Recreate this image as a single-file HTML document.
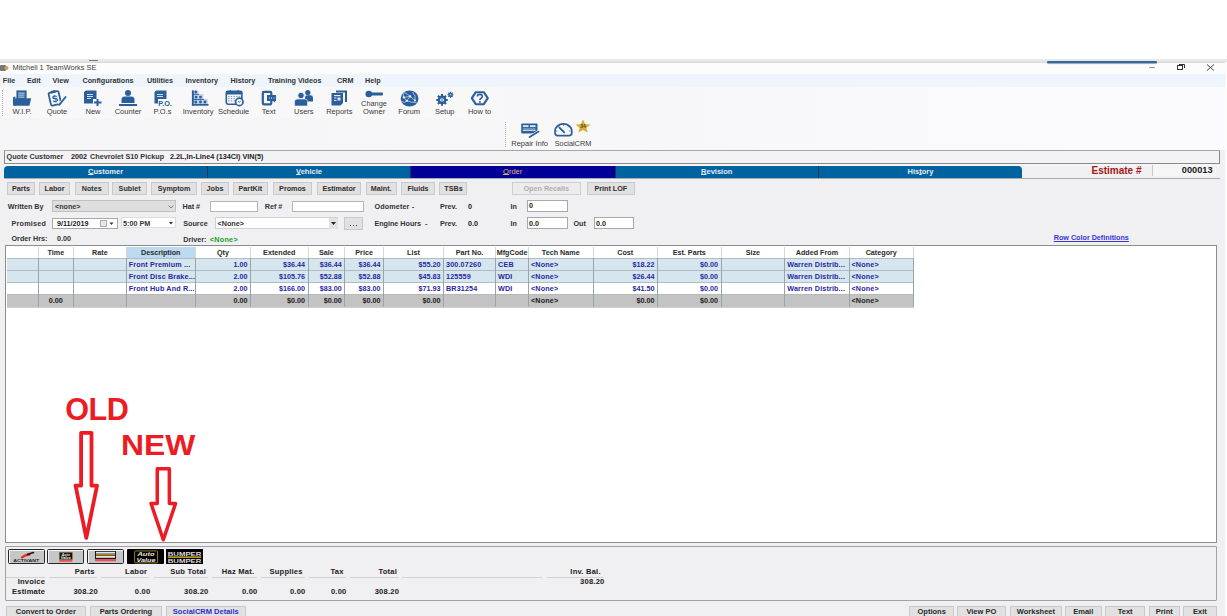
<!DOCTYPE html>
<html><head><meta charset="utf-8">
<style>
*{margin:0;padding:0;box-sizing:border-box}
html,body{width:1227px;height:616px;overflow:hidden}
body{position:relative;background:#f0eff2;font-family:"Liberation Sans",sans-serif;color:#262626}
.a{position:absolute}
.t{position:absolute;white-space:nowrap;line-height:1}
svg{position:absolute;overflow:visible}
</style></head><body>
<div class="a" style="left:0px;top:0px;width:1227px;height:59px;background:#fff"></div>
<div class="a" style="left:0px;top:58.6px;width:1227px;height:4.4px;background:linear-gradient(#ececec,#e4e4e4 60%,#d8d8d8 92%,#ececec)"></div>
<div class="a" style="left:0px;top:63px;width:1225px;height:11px;background:#fcfcfc"></div>
<div class="a" style="left:89.3px;top:59.6px;width:8.5px;height:0.9px;background:#7a7a7a"></div>
<svg style="left:0px;top:64px" width="9" height="8" viewBox="0 0 9 8"><rect x="0" y="1" width="6" height="6" rx="1" fill="#777"/><circle cx="6.5" cy="4" r="2" fill="#d9a23a"/></svg>
<div class="t" style="left:12.5px;top:64.31px;font-size:7.4px;color:#3c3c3c;">Mitchell 1 TeamWorks SE</div>
<div class="a" style="left:1047px;top:61.2px;width:110px;height:2.3px;background:#2a6aa6;border-radius:1.2px;box-shadow:0 0.8px 0.8px #8a8a8a"></div>
<div class="a" style="left:1149px;top:66.5px;width:6px;height:1px;background:#999"></div>
<svg style="left:1177px;top:64.2px" width="8" height="6" viewBox="0 0 8 6"><rect x="0.5" y="1.5" width="5" height="4" fill="none" stroke="#333" stroke-width="1"/><path d="M2 0.5H7.5V4" fill="none" stroke="#333" stroke-width="1"/></svg>
<svg style="left:1206px;top:64px" width="9" height="7" viewBox="0 0 9 7"><path d="M1 0.5L8 6.5M8 0.5L1 6.5" stroke="#333" stroke-width="0.9"/></svg>
<div class="a" style="left:1225px;top:62px;width:2px;height:554px;background:#fcfcfc"></div>
<div class="a" style="left:0px;top:74px;width:1224px;height:13px;background:#eef5fd"></div>
<div class="t" style="left:2.8px;top:77.34px;font-size:7.2px;font-weight:bold;color:#333;">File</div>
<div class="t" style="left:27px;top:77.34px;font-size:7.2px;font-weight:bold;color:#333;">Edit</div>
<div class="t" style="left:52.5px;top:77.34px;font-size:7.2px;font-weight:bold;color:#333;">View</div>
<div class="t" style="left:82.5px;top:77.34px;font-size:7.2px;font-weight:bold;color:#333;">Configurations</div>
<div class="t" style="left:147px;top:77.34px;font-size:7.2px;font-weight:bold;color:#333;">Utilities</div>
<div class="t" style="left:185.6px;top:77.34px;font-size:7.2px;font-weight:bold;color:#333;">Inventory</div>
<div class="t" style="left:230.6px;top:77.34px;font-size:7.2px;font-weight:bold;color:#333;">History</div>
<div class="t" style="left:268px;top:77.34px;font-size:7.2px;font-weight:bold;color:#333;">Training Videos</div>
<div class="t" style="left:337px;top:77.34px;font-size:7.2px;font-weight:bold;color:#333;">CRM</div>
<div class="t" style="left:365px;top:77.34px;font-size:7.2px;font-weight:bold;color:#333;">Help</div>
<div class="a" style="left:0px;top:87px;width:1225px;height:63px;background:linear-gradient(90deg,#f5f4f7,#f7f6f9 50%,#fbfafc)"></div>
<div class="a" style="left:0px;top:87px;width:499px;height:31px;background:#f8f8f9"></div>
<div class="a" style="left:504px;top:119px;width:92px;height:29px;background:#f8f8f9"></div>
<div class="a" style="left:1.5px;top:90px;width:1px;height:26px;border-left:1px dotted #b0b0b0"></div>
<div class="a" style="left:505px;top:122px;width:1px;height:25px;border-left:1px dotted #b0b0b0"></div>
<svg style="left:13px;top:90px" width="19" height="16" viewBox="0 0 19 16"><path d="M1.2 6.8Q0 6.8 0 8V15.6H2.5V6.8Z" fill="#2b5f9c"/><path d="M3.4 0.4H13.6V9.7H3.4Z" fill="#2b5f9c"/><rect x="5.2" y="2.6" width="6.4" height="1" fill="#cfdbe8"/><rect x="5.2" y="4.6" width="6.4" height="1" fill="#cfdbe8"/><rect x="5.2" y="6.6" width="6.4" height="1" fill="#cfdbe8"/><path d="M2.6 8.2H18.2L16.4 15.8H0.6Z" fill="#2b5f9c"/></svg>
<div class="t" style="left:-178.00px;width:400px;text-align:center;top:107.70px;font-size:7.5px;color:#3a3a3a;">W.I.P.</div>
<svg style="left:47px;top:90px" width="20" height="16" viewBox="0 0 20 16"><g transform="rotate(-13 8 8)"><rect x="2.6" y="1.8" width="10.2" height="13" rx="1.2" fill="none" stroke="#2b5f9c" stroke-width="1.8"/><rect x="5.2" y="0.2" width="5" height="2.6" rx="0.6" fill="#2b5f9c"/><text x="7.7" y="12.2" font-size="10" font-weight="bold" text-anchor="middle" fill="#2b5f9c" font-family="Liberation Sans">$</text></g><path d="M12.2 14.8L18.6 7" stroke="#f8f8f9" stroke-width="3"/><path d="M12.2 14.8L18.6 7" stroke="#2b5f9c" stroke-width="1.9" stroke-linecap="round"/></svg>
<div class="t" style="left:-143.00px;width:400px;text-align:center;top:107.70px;font-size:7.5px;color:#3a3a3a;">Quote</div>
<svg style="left:83px;top:90px" width="19" height="16" viewBox="0 0 19 16"><path d="M1 2L3 0.5H13.5V9H10V13.5H1Z" fill="#2b5f9c"/><rect x="4" y="4" width="6" height="1" fill="#cfdbe8"/><rect x="4" y="6" width="6" height="1" fill="#cfdbe8"/><rect x="4" y="8" width="4" height="1" fill="#cfdbe8"/><path d="M14.5 9V16M11 12.5H18.5" stroke="#2b5f9c" stroke-width="2"/></svg>
<div class="t" style="left:-107.00px;width:400px;text-align:center;top:107.70px;font-size:7.5px;color:#3a3a3a;">New</div>
<svg style="left:118px;top:90px" width="20" height="16" viewBox="0 0 20 16"><circle cx="10" cy="3" r="3" fill="#2b5f9c"/><path d="M3.5 13V9.5Q3.5 6.5 7 6.5H13Q16.5 6.5 16.5 9.5V13Z" fill="#2b5f9c"/><rect x="1" y="14" width="18" height="2" fill="#2b5f9c"/></svg>
<div class="t" style="left:-72.00px;width:400px;text-align:center;top:107.70px;font-size:7.5px;color:#3a3a3a;">Counter</div>
<svg style="left:154px;top:90px" width="19" height="16" viewBox="0 0 19 16"><path d="M0.5 2L2 0.5H12.5V9H4V13.5H0.5Z" fill="#2b5f9c"/><rect x="3" y="4" width="6" height="1" fill="#cfdbe8"/><rect x="3" y="6" width="6" height="1" fill="#cfdbe8"/><text x="4.3" y="15.9" font-size="7" font-weight="bold" fill="#2b5f9c" font-family="Liberation Sans" textLength="13.6" lengthAdjust="spacingAndGlyphs">P.O.</text></svg>
<div class="t" style="left:-37.50px;width:400px;text-align:center;top:107.70px;font-size:7.5px;color:#3a3a3a;">P.O.s</div>
<svg style="left:191px;top:90px" width="18" height="16" viewBox="0 0 18 16"><path d="M2 0.8H7.6V4H12.4V9H16.6V14H2Z" fill="#c4d2e2"/><rect x="0.9" y="0.3" width="1.9" height="15.4" fill="#2b5f9c"/><rect x="0.9" y="13.9" width="16.6" height="1.8" fill="#2b5f9c"/><rect x="1.9" y="3.8" width="6.1" height="1" fill="#2b5f9c"/><rect x="1.9" y="8.9" width="11" height="1" fill="#2b5f9c"/><g fill="#2b5f9c"><circle cx="4.8" cy="1.9" r="1.35"/><circle cx="5.1" cy="7.1" r="1.4"/><circle cx="9.5" cy="7.1" r="1.4"/><circle cx="4.8" cy="12" r="1.4"/><circle cx="9.5" cy="12" r="1.4"/><circle cx="14" cy="12" r="1.4"/></g></svg>
<div class="t" style="left:-1.80px;width:400px;text-align:center;top:107.70px;font-size:7.5px;color:#3a3a3a;">Inventory</div>
<svg style="left:225px;top:90px" width="19" height="16" viewBox="0 0 19 16"><rect x="1.3" y="1.2" width="15.6" height="13" rx="1.6" fill="#fbfbfc" stroke="#2b5f9c" stroke-width="1.6"/><rect x="1.3" y="1.2" width="15.6" height="3.3" fill="#2b5f9c"/><rect x="4.6" y="0" width="1.3" height="2" fill="#2b5f9c"/><rect x="12.6" y="0" width="1.3" height="2" fill="#2b5f9c"/><g fill="#8aa3bf"><rect x="3.1" y="5.9" width="1.5" height="1.2"/><rect x="5.7" y="5.9" width="1.5" height="1.2"/><rect x="8.4" y="5.9" width="1.5" height="1.2"/><rect x="11.1" y="5.9" width="1.5" height="1.2"/><rect x="13.8" y="5.9" width="1.5" height="1.2"/><rect x="3.1" y="8.1" width="1.5" height="1.2"/><rect x="5.7" y="8.1" width="1.5" height="1.2"/><rect x="8.4" y="8.1" width="1.5" height="1.2"/><rect x="3.1" y="10.3" width="1.5" height="1.2"/><rect x="5.7" y="10.3" width="1.5" height="1.2"/><rect x="8.4" y="10.3" width="1.5" height="1.2"/></g><circle cx="14.3" cy="11.9" r="3.7" fill="#f8f8f9" stroke="#2b5f9c" stroke-width="1.7"/><path d="M13 11.2L14.3 12.4L15.6 11" stroke="#2b5f9c" stroke-width="0.9" fill="none"/></svg>
<div class="t" style="left:33.60px;width:400px;text-align:center;top:107.70px;font-size:7.5px;color:#3a3a3a;">Schedule</div>
<svg style="left:261px;top:90px" width="16" height="16" viewBox="0 0 16 16"><rect x="1.8" y="1.8" width="8.5" height="12.5" rx="1" fill="none" stroke="#2b5f9c" stroke-width="2.2"/><path d="M6 5H15V11H14V12.5L12 11H6Z" fill="#2b5f9c"/><g fill="#dfe7f0"><rect x="8" y="7.5" width="1" height="1"/><rect x="10" y="7.5" width="1" height="1"/><rect x="12.5" y="7.5" width="1" height="1"/></g></svg>
<div class="t" style="left:68.70px;width:400px;text-align:center;top:107.70px;font-size:7.5px;color:#3a3a3a;">Text</div>
<svg style="left:294px;top:90px" width="20" height="16" viewBox="0 0 20 16"><circle cx="13.8" cy="2.6" r="2.6" fill="#2b5f9c"/><path d="M11 11.5V7.5Q11 5.3 13.5 5.3H16.5Q19 5.3 19 7.5V11.5Z" fill="#2b5f9c"/><circle cx="7" cy="5.5" r="3.2" fill="#2b5f9c" stroke="#f8f8f9" stroke-width="0.8"/><path d="M0.5 16V11.5Q0.5 9 3.5 9H10.5Q13.5 9 13.5 11.5V16Z" fill="#2b5f9c" stroke="#f8f8f9" stroke-width="0.6"/></svg>
<div class="t" style="left:103.80px;width:400px;text-align:center;top:107.70px;font-size:7.5px;color:#3a3a3a;">Users</div>
<svg style="left:331px;top:90px" width="17" height="16" viewBox="0 0 17 16"><path d="M5 0.5H16V12H14V2.5H5Z" fill="#2b5f9c"/><path d="M0.5 3H12V13L9.5 15.5H0.5Z" fill="#2b5f9c"/><g fill="#dfe7f0"><rect x="3" y="5" width="6.5" height="1.2"/><rect x="3" y="7.5" width="2.5" height="1"/><rect x="6.5" y="7.5" width="3" height="3"/><rect x="3" y="10" width="2.5" height="1"/></g></svg>
<div class="t" style="left:139.30px;width:400px;text-align:center;top:107.70px;font-size:7.5px;color:#3a3a3a;">Reports</div>
<svg style="left:365px;top:90px" width="19" height="8" viewBox="0 0 19 8"><circle cx="3.8" cy="4" r="3.3" fill="#2b5f9c"/><rect x="5" y="2.5" width="13" height="3" rx="1" fill="#2b5f9c"/></svg>
<div class="t" style="left:174.00px;width:400px;text-align:center;top:99.51px;font-size:7.4px;color:#3a3a3a;">Change</div>
<div class="t" style="left:174.10px;width:400px;text-align:center;top:107.70px;font-size:7.5px;color:#3a3a3a;">Owner</div>
<svg style="left:400px;top:90px" width="20" height="17" viewBox="0 0 20 17"><ellipse cx="9.6" cy="8.5" rx="8.9" ry="8" fill="#2b5f9c"/><path d="M3.8 7.4L10.2 6.4L14.9 10.5M3.8 7.4L6.8 10.8L10.2 6.4M6.8 10.8Q11 12.5 16.5 12.5M4.5 2.6Q8 4.5 10.2 6.4M12.5 2Q16.5 6 14.9 10.5M1.5 11.5Q5 13.5 6.8 10.8M3.8 7.4Q2.5 5 4.2 2.5" stroke="#c2d3e6" stroke-width="0.8" fill="none"/><g fill="#eef3f8"><circle cx="3.8" cy="7.4" r="1.15"/><circle cx="10.2" cy="6.4" r="1.15"/><circle cx="6.8" cy="10.8" r="1.15"/><circle cx="14.9" cy="10.5" r="1"/></g></svg>
<div class="t" style="left:209.20px;width:400px;text-align:center;top:107.70px;font-size:7.5px;color:#3a3a3a;">Forum</div>
<svg style="left:435px;top:91px" width="20" height="15" viewBox="0 0 20 15"><circle cx="7" cy="8.9" r="4.4" fill="#2b5f9c"/><g stroke="#2b5f9c" stroke-width="2"><path d="M7 3.1V14.7M1.2 8.9H12.8M2.9 4.8L11.1 13M11.1 4.8L2.9 13"/></g><ellipse cx="7" cy="8.9" rx="2.1" ry="1.6" fill="#dfe7f0"/><ellipse cx="7" cy="8.9" rx="0.9" ry="0.7" fill="#2b5f9c"/><circle cx="15.5" cy="3.7" r="2.2" fill="#2b5f9c"/><g stroke="#2b5f9c" stroke-width="1.1"><path d="M15.5 0.7V6.7M12.5 3.7H18.5M13.4 1.6L17.6 5.8M17.6 1.6L13.4 5.8"/></g><circle cx="15.5" cy="3.7" r="0.9" fill="#9fb5cc"/></svg>
<div class="t" style="left:244.70px;width:400px;text-align:center;top:107.70px;font-size:7.5px;color:#3a3a3a;">Setup</div>
<svg style="left:470px;top:91px" width="20" height="15" viewBox="0 0 20 15"><path d="M5.8 1.2H13.8L17.8 7.2L13.8 13.2H5.8L1.8 7.2Z" fill="none" stroke="#2b5f9c" stroke-width="2.1" stroke-linejoin="round"/><path d="M7.4 5.6Q7.4 3.4 9.8 3.4Q12.3 3.4 12.3 5.5Q12.3 6.8 10.8 7.5Q9.9 7.9 9.9 9" fill="none" stroke="#2b5f9c" stroke-width="1.7"/><circle cx="9.9" cy="11" r="1" fill="#2b5f9c"/></svg>
<div class="t" style="left:279.60px;width:400px;text-align:center;top:107.70px;font-size:7.5px;color:#3a3a3a;">How to</div>
<svg style="left:520px;top:123px" width="20" height="16" viewBox="0 0 20 16"><rect x="1.2" y="0.5" width="16.3" height="10.1" rx="0.8" fill="#2b5f9c"/><rect x="2.9" y="2.2" width="5.6" height="1.9" fill="#dbe5ef"/><rect x="9.9" y="2.2" width="5.6" height="1.9" fill="#dbe5ef"/><rect x="2.9" y="5" width="12.6" height="0.6" fill="#9fb5cc"/><rect x="2.9" y="6.6" width="12.6" height="1.3" fill="#dbe5ef"/><path d="M9.6 14.1L18.6 8.6" stroke="#f8f8f9" stroke-width="3"/><path d="M9.6 14.1L18.6 8.6" stroke="#2b5f9c" stroke-width="1.8" stroke-linecap="round"/></svg>
<div class="t" style="left:329.60px;width:400px;text-align:center;top:139.90px;font-size:7.5px;color:#3a3a3a;">Repair Info</div>
<svg style="left:553px;top:122px" width="21" height="16" viewBox="0 0 21 16"><path d="M2 9A8.4 7.1 0 0 1 18.8 9V10.8Q18.8 13.7 16 13.7H4.8Q2 13.7 2 10.8Z" fill="none" stroke="#2b5f9c" stroke-width="1.7" stroke-linejoin="round"/><path d="M6.4 5.6L11.2 10.4" stroke="#2b5f9c" stroke-width="1.9" stroke-linecap="round"/><g stroke="#2b5f9c" stroke-width="0.8"><path d="M10.4 2.4V3.8M15.6 4.2L14.6 5.2M17.6 9H16.2M3.2 9H4.6M5.2 4.2L6.2 5.2"/></g></svg>
<svg style="left:575px;top:119px" width="16" height="14" viewBox="0 0 16 14"><path d="M8 0.5L10.2 5.2L15.5 5.6L11.4 9L12.7 13.5L8 11L3.3 13.5L4.6 9L0.5 5.6L5.8 5.2Z" fill="#d8ad33"/><text x="8" y="9.3" font-size="5" font-weight="bold" text-anchor="middle" fill="#5a4a20" font-family="Liberation Sans">34</text></svg>
<div class="t" style="left:373.00px;width:400px;text-align:center;top:139.92px;font-size:7.3px;color:#3a3a3a;">SocialCRM</div>
<div class="a" style="left:4px;top:149.7px;width:1216px;height:14.3px;background:#f3f3f5;border:1px solid #8a8a8a;border-top-color:#a6a6a6"></div>
<div class="t" style="left:6.5px;top:153.13px;font-size:7.25px;font-weight:bold;color:#333;">Quote Customer</div>
<div class="t" style="left:71px;top:153.13px;font-size:7.25px;font-weight:bold;color:#222;">2002</div>
<div class="t" style="left:90px;top:153.13px;font-size:7.25px;font-weight:bold;color:#333;">Chevrolet S10 Pickup</div>
<div class="t" style="left:170px;top:153.13px;font-size:7.25px;font-weight:bold;color:#222;">2.2L,In-Line4 (134CI) VIN(5)</div>
<div class="a" style="left:4px;top:164px;width:1216px;height:2px;background:#f6f6f8"></div>
<div class="a" style="left:4px;top:177.6px;width:1216px;height:1.4px;background:#a2acb4"></div>
<div class="a" style="left:4px;top:166px;width:203.5px;height:11.7px;background:#00629e;border-top-left-radius:4px"></div>
<div class="a" style="left:207.5px;top:166px;width:203.1px;height:11.7px;background:#00629e"></div>
<div class="a" style="left:410.6px;top:166px;width:204.4px;height:11.7px;background:#000097"></div>
<div class="a" style="left:615px;top:166px;width:203px;height:11.7px;background:#00629e"></div>
<div class="a" style="left:818px;top:166px;width:203.5px;height:11.7px;background:#00629e;border-top-right-radius:4px"></div>
<div class="a" style="left:207.2px;top:166px;width:1px;height:11.7px;background:#13345a"></div>
<div class="a" style="left:410.3px;top:166px;width:1px;height:11.7px;background:#13345a"></div>
<div class="a" style="left:614.7px;top:166px;width:1px;height:11.7px;background:#13345a"></div>
<div class="a" style="left:817.7px;top:166px;width:1px;height:11.7px;background:#13345a"></div>
<div class="t" style="left:-94.40px;width:400px;text-align:center;top:167.80px;font-size:7.5px;font-weight:bold;color:#e4eef6;text-underline-offset:0.3px;text-decoration-thickness:0.6px"><u>C</u>ustomer</div>
<div class="t" style="left:109.00px;width:400px;text-align:center;top:167.80px;font-size:7.5px;font-weight:bold;color:#e4eef6;text-underline-offset:0.3px;text-decoration-thickness:0.6px"><u>V</u>ehicle</div>
<div class="t" style="left:312.70px;width:400px;text-align:center;top:167.80px;font-size:7.5px;color:#e0b274;text-underline-offset:0.3px;text-decoration-thickness:0.6px"><u>O</u>rder</div>
<div class="t" style="left:516.70px;width:400px;text-align:center;top:167.80px;font-size:7.5px;font-weight:bold;color:#e4eef6;text-underline-offset:0.3px;text-decoration-thickness:0.6px"><u>R</u>evision</div>
<div class="t" style="left:720.40px;width:400px;text-align:center;top:167.80px;font-size:7.5px;font-weight:bold;color:#e4eef6;text-underline-offset:0.3px;text-decoration-thickness:0.6px">His<u>t</u>ory</div>
<div class="t" style="left:1091.5px;top:166.40px;font-size:10px;font-weight:bold;color:#a31818;">Estimate #</div>
<div class="a" style="left:1151.5px;top:165px;width:64px;height:10.8px;background:#f5f5f6;border-left:1px solid #c8c8c8"></div>
<div class="t" style="right:14.50px;top:165.80px;font-size:9.2px;font-weight:bold;color:#222;">000013</div>
<div class="a" style="left:6.9px;top:182.3px;width:28.1px;height:13.199999999999989px;background:#e1e1e1;border:1px solid #cacaca"></div>
<div class="t" style="left:-179.05px;width:400px;text-align:center;top:185.44px;font-size:7.2px;font-weight:bold;color:#2e2e2e;">Parts</div>
<div class="a" style="left:38.75px;top:182.3px;width:31.5px;height:13.199999999999989px;background:#e1e1e1;border:1px solid #cacaca"></div>
<div class="t" style="left:-145.50px;width:400px;text-align:center;top:185.44px;font-size:7.2px;font-weight:bold;color:#2e2e2e;">Labor</div>
<div class="a" style="left:74.75px;top:182.3px;width:34.0px;height:13.199999999999989px;background:#e1e1e1;border:1px solid #cacaca"></div>
<div class="t" style="left:-108.25px;width:400px;text-align:center;top:185.44px;font-size:7.2px;font-weight:bold;color:#2e2e2e;">Notes</div>
<div class="a" style="left:112.25px;top:182.3px;width:34.650000000000006px;height:13.199999999999989px;background:#e1e1e1;border:1px solid #cacaca"></div>
<div class="t" style="left:-70.43px;width:400px;text-align:center;top:185.44px;font-size:7.2px;font-weight:bold;color:#2e2e2e;">Sublet</div>
<div class="a" style="left:151px;top:182.3px;width:46px;height:13.199999999999989px;background:#e1e1e1;border:1px solid #cacaca"></div>
<div class="t" style="left:-26.00px;width:400px;text-align:center;top:185.44px;font-size:7.2px;font-weight:bold;color:#2e2e2e;">Symptom</div>
<div class="a" style="left:200.6px;top:182.3px;width:28.80000000000001px;height:13.199999999999989px;background:#e1e1e1;border:1px solid #cacaca"></div>
<div class="t" style="left:15.00px;width:400px;text-align:center;top:185.44px;font-size:7.2px;font-weight:bold;color:#2e2e2e;">Jobs</div>
<div class="a" style="left:233px;top:182.3px;width:34.75px;height:13.199999999999989px;background:#e1e1e1;border:1px solid #cacaca"></div>
<div class="t" style="left:50.38px;width:400px;text-align:center;top:185.44px;font-size:7.2px;font-weight:bold;color:#2e2e2e;">PartKit</div>
<div class="a" style="left:273px;top:182.3px;width:39px;height:13.199999999999989px;background:#e1e1e1;border:1px solid #cacaca"></div>
<div class="t" style="left:92.50px;width:400px;text-align:center;top:185.44px;font-size:7.2px;font-weight:bold;color:#2e2e2e;">Promos</div>
<div class="a" style="left:317px;top:182.3px;width:44px;height:13.199999999999989px;background:#e1e1e1;border:1px solid #cacaca"></div>
<div class="t" style="left:139.00px;width:400px;text-align:center;top:185.44px;font-size:7.2px;font-weight:bold;color:#2e2e2e;">Estimator</div>
<div class="a" style="left:366px;top:182.3px;width:30.5px;height:13.199999999999989px;background:#e1e1e1;border:1px solid #cacaca"></div>
<div class="t" style="left:181.25px;width:400px;text-align:center;top:185.44px;font-size:7.2px;font-weight:bold;color:#2e2e2e;">Maint.</div>
<div class="a" style="left:401px;top:182.3px;width:34px;height:13.199999999999989px;background:#e1e1e1;border:1px solid #cacaca"></div>
<div class="t" style="left:218.00px;width:400px;text-align:center;top:185.44px;font-size:7.2px;font-weight:bold;color:#2e2e2e;">Fluids</div>
<div class="a" style="left:439.4px;top:182.3px;width:28.100000000000023px;height:13.199999999999989px;background:#e1e1e1;border:1px solid #cacaca"></div>
<div class="t" style="left:253.45px;width:400px;text-align:center;top:185.44px;font-size:7.2px;font-weight:bold;color:#2e2e2e;">TSBs</div>
<div class="a" style="left:512px;top:182.3px;width:68.60000000000002px;height:13.199999999999989px;background:#ececee;border:1px solid #cfcfcf"></div>
<div class="t" style="left:346.30px;width:400px;text-align:center;top:185.44px;font-size:7.2px;font-weight:bold;color:#b0b0b0;">Open Recalls</div>
<div class="a" style="left:587px;top:182.3px;width:47.75px;height:13.199999999999989px;background:#e1e1e1;border:1px solid #cacaca"></div>
<div class="t" style="left:410.88px;width:400px;text-align:center;top:185.44px;font-size:7.2px;font-weight:bold;color:#2e2e2e;">Print LOF</div>
<div class="t" style="left:7.75px;top:203.14px;font-size:7.2px;font-weight:bold;color:#333;">Written By</div>
<div class="a" style="left:52px;top:200.3px;width:124px;height:12px;background:#dedede;border:1px solid #c0c0c0"></div>
<div class="t" style="left:55px;top:203.14px;font-size:7.2px;font-weight:bold;color:#3a3a3a;">&lt;none&gt;</div>
<svg style="left:167.5px;top:204.5px" width="6" height="4" viewBox="0 0 6 4"><path d="M0.5 0.5L3 3L5.5 0.5" stroke="#666" stroke-width="0.8" fill="none"/></svg>
<div class="t" style="left:182.5px;top:203.14px;font-size:7.2px;font-weight:bold;color:#333;">Hat #</div>
<div class="a" style="left:210px;top:200.6px;width:47.5px;height:11px;background:#fff;border:1px solid #b4b4b4"></div>
<div class="t" style="left:264.75px;top:203.14px;font-size:7.2px;font-weight:bold;color:#333;">Ref #</div>
<div class="a" style="left:292.4px;top:200.7px;width:71.3px;height:11.3px;background:#fff;border:1px solid #b4b4b4"></div>
<div class="t" style="left:374.4px;top:202.64px;font-size:7.2px;font-weight:bold;color:#333;letter-spacing:0.15px">Odometer&nbsp;-</div>
<div class="t" style="left:440px;top:203.14px;font-size:7.2px;font-weight:bold;color:#333;">Prev.</div>
<div class="t" style="left:468px;top:203.14px;font-size:7.2px;font-weight:bold;color:#222;">0</div>
<div class="t" style="left:510.6px;top:202.94px;font-size:7.2px;font-weight:bold;color:#333;">In</div>
<div class="a" style="left:527px;top:200px;width:41px;height:11.5px;background:#fff;border:1px solid #a8a8a8"></div>
<div class="t" style="left:529px;top:202.24px;font-size:7.2px;font-weight:bold;color:#222;">0</div>
<div class="t" style="left:11.5px;top:220.04px;font-size:7.2px;font-weight:bold;color:#333;letter-spacing:0.25px">Promised</div>
<div class="a" style="left:52px;top:217.5px;width:66px;height:11.3px;background:#fff;border:1px solid #a8a8a8"></div>
<div class="t" style="left:57px;top:220.04px;font-size:7.2px;font-weight:bold;color:#222;">9/11/2019</div>
<svg style="left:99.5px;top:219.5px" width="15" height="7" viewBox="0 0 15 7"><rect x="0.5" y="0.5" width="6" height="6" fill="#e8e8e8" stroke="#999" stroke-width="0.8"/><path d="M9.5 2.5H13.5L11.5 5Z" fill="#333"/></svg>
<div class="a" style="left:121px;top:217.4px;width:55px;height:11px;background:#fff;border:1px solid #dcdcdc"></div>
<div class="t" style="left:123px;top:220.04px;font-size:7.2px;font-weight:bold;color:#333;">5:00 PM</div>
<svg style="left:168.5px;top:221.5px" width="4" height="3" viewBox="0 0 4 3"><path d="M0 0H4L2 2.5Z" fill="#333"/></svg>
<div class="t" style="left:183.3px;top:220.04px;font-size:7.2px;font-weight:bold;color:#333;">Source</div>
<div class="a" style="left:214.7px;top:217.4px;width:123.2px;height:11.3px;background:#fff;border:1px solid #d0d0d0"></div>
<div class="t" style="left:217.5px;top:220.04px;font-size:7.2px;font-weight:bold;color:#333;">&lt;None&gt;</div>
<div class="a" style="left:328.5px;top:217.6px;width:9.2px;height:11px;background:#e2e2e2"></div>
<svg style="left:331px;top:221.5px" width="5" height="3" viewBox="0 0 5 3"><path d="M0 0H5L2.5 3Z" fill="#222"/></svg>
<div class="a" style="left:344px;top:217.4px;width:18.8px;height:12.6px;background:#e1e1e1;border:1px solid #c8c8c8"></div>
<div class="a" style="left:350.3px;top:225px;width:1.2px;height:1.2px;background:#444"></div>
<div class="a" style="left:352.9px;top:225px;width:1.2px;height:1.2px;background:#444"></div>
<div class="a" style="left:355.5px;top:225px;width:1.2px;height:1.2px;background:#444"></div>
<div class="t" style="left:374.4px;top:220.04px;font-size:7.2px;font-weight:bold;color:#333;">Engine Hours&nbsp;&nbsp;-</div>
<div class="t" style="left:440px;top:220.04px;font-size:7.2px;font-weight:bold;color:#333;">Prev.</div>
<div class="t" style="left:468px;top:220.04px;font-size:7.2px;font-weight:bold;color:#222;">0.0</div>
<div class="t" style="left:510.6px;top:219.84px;font-size:7.2px;font-weight:bold;color:#333;">In</div>
<div class="a" style="left:527px;top:217px;width:41px;height:11.7px;background:#fff;border:1px solid #a8a8a8"></div>
<div class="t" style="left:529px;top:219.54px;font-size:7.2px;font-weight:bold;color:#222;">0.0</div>
<div class="t" style="left:573.5px;top:219.84px;font-size:7.2px;font-weight:bold;color:#333;">Out</div>
<div class="a" style="left:594px;top:217px;width:40.4px;height:11.7px;background:#fff;border:1px solid #a8a8a8"></div>
<div class="t" style="left:596px;top:219.54px;font-size:7.2px;font-weight:bold;color:#222;">0.0</div>
<div class="t" style="left:11.5px;top:235.14px;font-size:7.2px;font-weight:bold;color:#333;">Order Hrs:</div>
<div class="t" style="left:57px;top:235.14px;font-size:7.2px;font-weight:bold;color:#333;">0.00</div>
<div class="t" style="left:183.3px;top:235.74px;font-size:7.2px;font-weight:bold;color:#333;">Driver:</div>
<div class="t" style="left:209.75px;top:235.74px;font-size:7.2px;font-weight:bold;color:#22a022;letter-spacing:0.3px">&lt;None&gt;</div>
<div class="t" style="left:1053.75px;top:234.34px;font-size:7.2px;font-weight:bold;color:#3535d5;text-decoration:underline">Row Color Definitions</div>
<div class="a" style="left:5px;top:245px;width:1212px;height:298px;background:#fff;border:1.6px solid #8c8c8c;border-right-width:1.4px;border-bottom-width:1.4px"></div>
<div class="a" style="left:6.5px;top:258px;width:907px;height:12.25px;background:#d5e6ef"></div>
<div class="a" style="left:6.5px;top:270.25px;width:907px;height:12.25px;background:#d5e6ef"></div>
<div class="a" style="left:6.5px;top:294.4px;width:907px;height:12.6px;background:#c3c3c3"></div>
<div class="a" style="left:126.25px;top:247px;width:69px;height:11px;background:#bcdaf2"></div>
<div class="a" style="left:6.5px;top:257.5px;width:907px;height:1px;background:#b0bcc3"></div>
<div class="a" style="left:6.5px;top:269.75px;width:907px;height:1px;background:#b0bcc3"></div>
<div class="a" style="left:6.5px;top:282.0px;width:907px;height:1px;background:#b0bcc3"></div>
<div class="a" style="left:6.5px;top:293.9px;width:907px;height:0.8px;background:#b8b8b8"></div>
<div class="a" style="left:6.5px;top:306.5px;width:907px;height:0.8px;background:#d0d0d0"></div>
<div class="a" style="left:37.6px;top:247px;width:1px;height:11px;background:#d6d6d6"></div>
<div class="a" style="left:37.6px;top:258px;width:1px;height:49px;background:#9aa4aa"></div>
<div class="a" style="left:73.0px;top:247px;width:1px;height:11px;background:#d6d6d6"></div>
<div class="a" style="left:73.0px;top:258px;width:1px;height:49px;background:#9aa4aa"></div>
<div class="a" style="left:125.75px;top:247px;width:1px;height:11px;background:#d6d6d6"></div>
<div class="a" style="left:125.75px;top:258px;width:1px;height:49px;background:#9aa4aa"></div>
<div class="a" style="left:194.75px;top:247px;width:1px;height:11px;background:#d6d6d6"></div>
<div class="a" style="left:194.75px;top:258px;width:1px;height:49px;background:#9aa4aa"></div>
<div class="a" style="left:250.1px;top:247px;width:1px;height:11px;background:#d6d6d6"></div>
<div class="a" style="left:250.1px;top:258px;width:1px;height:49px;background:#9aa4aa"></div>
<div class="a" style="left:307.5px;top:247px;width:1px;height:11px;background:#d6d6d6"></div>
<div class="a" style="left:307.5px;top:258px;width:1px;height:49px;background:#9aa4aa"></div>
<div class="a" style="left:344.25px;top:247px;width:1px;height:11px;background:#d6d6d6"></div>
<div class="a" style="left:344.25px;top:258px;width:1px;height:49px;background:#9aa4aa"></div>
<div class="a" style="left:383.0px;top:247px;width:1px;height:11px;background:#d6d6d6"></div>
<div class="a" style="left:383.0px;top:258px;width:1px;height:49px;background:#9aa4aa"></div>
<div class="a" style="left:443.0px;top:247px;width:1px;height:11px;background:#d6d6d6"></div>
<div class="a" style="left:443.0px;top:258px;width:1px;height:49px;background:#9aa4aa"></div>
<div class="a" style="left:495.1px;top:247px;width:1px;height:11px;background:#d6d6d6"></div>
<div class="a" style="left:495.1px;top:258px;width:1px;height:49px;background:#9aa4aa"></div>
<div class="a" style="left:528.0px;top:247px;width:1px;height:11px;background:#d6d6d6"></div>
<div class="a" style="left:528.0px;top:258px;width:1px;height:49px;background:#9aa4aa"></div>
<div class="a" style="left:592.5px;top:247px;width:1px;height:11px;background:#d6d6d6"></div>
<div class="a" style="left:592.5px;top:258px;width:1px;height:49px;background:#9aa4aa"></div>
<div class="a" style="left:657.0px;top:247px;width:1px;height:11px;background:#d6d6d6"></div>
<div class="a" style="left:657.0px;top:258px;width:1px;height:49px;background:#9aa4aa"></div>
<div class="a" style="left:720.5px;top:247px;width:1px;height:11px;background:#d6d6d6"></div>
<div class="a" style="left:720.5px;top:258px;width:1px;height:49px;background:#9aa4aa"></div>
<div class="a" style="left:784.25px;top:247px;width:1px;height:11px;background:#d6d6d6"></div>
<div class="a" style="left:784.25px;top:258px;width:1px;height:49px;background:#9aa4aa"></div>
<div class="a" style="left:848.5px;top:247px;width:1px;height:11px;background:#d6d6d6"></div>
<div class="a" style="left:848.5px;top:258px;width:1px;height:49px;background:#9aa4aa"></div>
<div class="a" style="left:913.0px;top:247px;width:1px;height:11px;background:#d6d6d6"></div>
<div class="a" style="left:913.0px;top:258px;width:1px;height:49px;background:#9aa4aa"></div>
<div class="t" style="left:-144.20px;width:400px;text-align:center;top:249.34px;font-size:7.2px;font-weight:bold;color:#2a2a2a;">Time</div>
<div class="t" style="left:-100.12px;width:400px;text-align:center;top:249.34px;font-size:7.2px;font-weight:bold;color:#2a2a2a;">Rate</div>
<div class="t" style="left:-39.25px;width:400px;text-align:center;top:249.34px;font-size:7.2px;font-weight:bold;color:#2a2a2a;">Description</div>
<div class="t" style="left:22.93px;width:400px;text-align:center;top:249.34px;font-size:7.2px;font-weight:bold;color:#2a2a2a;">Qty</div>
<div class="t" style="left:79.30px;width:400px;text-align:center;top:249.34px;font-size:7.2px;font-weight:bold;color:#2a2a2a;">Extended</div>
<div class="t" style="left:126.38px;width:400px;text-align:center;top:249.34px;font-size:7.2px;font-weight:bold;color:#2a2a2a;">Sale</div>
<div class="t" style="left:164.12px;width:400px;text-align:center;top:249.34px;font-size:7.2px;font-weight:bold;color:#2a2a2a;">Price</div>
<div class="t" style="left:213.50px;width:400px;text-align:center;top:249.34px;font-size:7.2px;font-weight:bold;color:#2a2a2a;">List</div>
<div class="t" style="left:269.55px;width:400px;text-align:center;top:249.34px;font-size:7.2px;font-weight:bold;color:#2a2a2a;">Part No.</div>
<div class="t" style="left:312.05px;width:400px;text-align:center;top:249.34px;font-size:7.2px;font-weight:bold;color:#2a2a2a;">MfgCode</div>
<div class="t" style="left:360.75px;width:400px;text-align:center;top:249.34px;font-size:7.2px;font-weight:bold;color:#2a2a2a;">Tech Name</div>
<div class="t" style="left:425.25px;width:400px;text-align:center;top:249.34px;font-size:7.2px;font-weight:bold;color:#2a2a2a;">Cost</div>
<div class="t" style="left:489.25px;width:400px;text-align:center;top:249.34px;font-size:7.2px;font-weight:bold;color:#2a2a2a;">Est. Parts</div>
<div class="t" style="left:552.88px;width:400px;text-align:center;top:249.34px;font-size:7.2px;font-weight:bold;color:#2a2a2a;">Size</div>
<div class="t" style="left:616.88px;width:400px;text-align:center;top:249.34px;font-size:7.2px;font-weight:bold;color:#2a2a2a;">Added From</div>
<div class="t" style="left:681.25px;width:400px;text-align:center;top:249.34px;font-size:7.2px;font-weight:bold;color:#2a2a2a;">Category</div>
<div class="t" style="left:128.75px;top:260.74px;font-size:7.2px;font-weight:bold;color:#2828a0;letter-spacing:0.15px">Front Premium ...</div>
<div class="t" style="right:979.40px;top:260.74px;font-size:7.2px;font-weight:bold;color:#2828a0;">1.00</div>
<div class="t" style="right:922.00px;top:260.74px;font-size:7.2px;font-weight:bold;color:#2828a0;">$36.44</div>
<div class="t" style="right:885.25px;top:260.74px;font-size:7.2px;font-weight:bold;color:#2828a0;">$36.44</div>
<div class="t" style="right:846.50px;top:260.74px;font-size:7.2px;font-weight:bold;color:#2828a0;">$36.44</div>
<div class="t" style="right:786.50px;top:260.74px;font-size:7.2px;font-weight:bold;color:#2828a0;">$55.20</div>
<div class="t" style="left:446.0px;top:260.74px;font-size:7.2px;font-weight:bold;color:#2828a0;letter-spacing:0.15px">300.07260</div>
<div class="t" style="left:498.1px;top:260.74px;font-size:7.2px;font-weight:bold;color:#2828a0;letter-spacing:0.15px">CEB</div>
<div class="t" style="left:531.0px;top:260.74px;font-size:7.2px;font-weight:bold;color:#2828a0;letter-spacing:0.15px">&lt;None&gt;</div>
<div class="t" style="right:572.50px;top:260.74px;font-size:7.2px;font-weight:bold;color:#2828a0;">$18.22</div>
<div class="t" style="right:509.00px;top:260.74px;font-size:7.2px;font-weight:bold;color:#2828a0;">$0.00</div>
<div class="t" style="left:787.25px;top:260.74px;font-size:7.2px;font-weight:bold;color:#2828a0;letter-spacing:0.15px">Warren Distrib...</div>
<div class="t" style="left:851.5px;top:260.74px;font-size:7.2px;font-weight:bold;color:#2828a0;letter-spacing:0.15px">&lt;None&gt;</div>
<div class="t" style="left:128.75px;top:272.99px;font-size:7.2px;font-weight:bold;color:#2828a0;letter-spacing:0.15px">Front Disc Brake...</div>
<div class="t" style="right:979.40px;top:272.99px;font-size:7.2px;font-weight:bold;color:#2828a0;">2.00</div>
<div class="t" style="right:922.00px;top:272.99px;font-size:7.2px;font-weight:bold;color:#2828a0;">$105.76</div>
<div class="t" style="right:885.25px;top:272.99px;font-size:7.2px;font-weight:bold;color:#2828a0;">$52.88</div>
<div class="t" style="right:846.50px;top:272.99px;font-size:7.2px;font-weight:bold;color:#2828a0;">$52.88</div>
<div class="t" style="right:786.50px;top:272.99px;font-size:7.2px;font-weight:bold;color:#2828a0;">$45.83</div>
<div class="t" style="left:446.0px;top:272.99px;font-size:7.2px;font-weight:bold;color:#2828a0;letter-spacing:0.15px">125559</div>
<div class="t" style="left:498.1px;top:272.99px;font-size:7.2px;font-weight:bold;color:#2828a0;letter-spacing:0.15px">WDI</div>
<div class="t" style="left:531.0px;top:272.99px;font-size:7.2px;font-weight:bold;color:#2828a0;letter-spacing:0.15px">&lt;None&gt;</div>
<div class="t" style="right:572.50px;top:272.99px;font-size:7.2px;font-weight:bold;color:#2828a0;">$26.44</div>
<div class="t" style="right:509.00px;top:272.99px;font-size:7.2px;font-weight:bold;color:#2828a0;">$0.00</div>
<div class="t" style="left:787.25px;top:272.99px;font-size:7.2px;font-weight:bold;color:#2828a0;letter-spacing:0.15px">Warren Distrib...</div>
<div class="t" style="left:851.5px;top:272.99px;font-size:7.2px;font-weight:bold;color:#2828a0;letter-spacing:0.15px">&lt;None&gt;</div>
<div class="t" style="left:128.75px;top:285.24px;font-size:7.2px;font-weight:bold;color:#2828a0;letter-spacing:0.15px">Front Hub And R...</div>
<div class="t" style="right:979.40px;top:285.24px;font-size:7.2px;font-weight:bold;color:#2828a0;">2.00</div>
<div class="t" style="right:922.00px;top:285.24px;font-size:7.2px;font-weight:bold;color:#2828a0;">$166.00</div>
<div class="t" style="right:885.25px;top:285.24px;font-size:7.2px;font-weight:bold;color:#2828a0;">$83.00</div>
<div class="t" style="right:846.50px;top:285.24px;font-size:7.2px;font-weight:bold;color:#2828a0;">$83.00</div>
<div class="t" style="right:786.50px;top:285.24px;font-size:7.2px;font-weight:bold;color:#2828a0;">$71.93</div>
<div class="t" style="left:446.0px;top:285.24px;font-size:7.2px;font-weight:bold;color:#2828a0;letter-spacing:0.15px">BR31254</div>
<div class="t" style="left:498.1px;top:285.24px;font-size:7.2px;font-weight:bold;color:#2828a0;letter-spacing:0.15px">WDI</div>
<div class="t" style="left:531.0px;top:285.24px;font-size:7.2px;font-weight:bold;color:#2828a0;letter-spacing:0.15px">&lt;None&gt;</div>
<div class="t" style="right:572.50px;top:285.24px;font-size:7.2px;font-weight:bold;color:#2828a0;">$41.50</div>
<div class="t" style="right:509.00px;top:285.24px;font-size:7.2px;font-weight:bold;color:#2828a0;">$0.00</div>
<div class="t" style="left:787.25px;top:285.24px;font-size:7.2px;font-weight:bold;color:#2828a0;letter-spacing:0.15px">Warren Distrib...</div>
<div class="t" style="left:851.5px;top:285.24px;font-size:7.2px;font-weight:bold;color:#2828a0;letter-spacing:0.15px">&lt;None&gt;</div>
<div class="t" style="left:-144.20px;width:400px;text-align:center;top:297.14px;font-size:7.2px;font-weight:bold;color:#202020;">0.00</div>
<div class="t" style="right:979.40px;top:297.14px;font-size:7.2px;font-weight:bold;color:#202020;">0.00</div>
<div class="t" style="right:922.00px;top:297.14px;font-size:7.2px;font-weight:bold;color:#202020;">$0.00</div>
<div class="t" style="right:885.25px;top:297.14px;font-size:7.2px;font-weight:bold;color:#202020;">$0.00</div>
<div class="t" style="right:846.50px;top:297.14px;font-size:7.2px;font-weight:bold;color:#202020;">$0.00</div>
<div class="t" style="right:786.50px;top:297.14px;font-size:7.2px;font-weight:bold;color:#202020;">$0.00</div>
<div class="t" style="left:531.0px;top:297.14px;font-size:7.2px;font-weight:bold;color:#202020;letter-spacing:0.15px">&lt;None&gt;</div>
<div class="t" style="right:572.50px;top:297.14px;font-size:7.2px;font-weight:bold;color:#202020;">$0.00</div>
<div class="t" style="right:509.00px;top:297.14px;font-size:7.2px;font-weight:bold;color:#202020;">$0.00</div>
<div class="t" style="left:851.5px;top:297.14px;font-size:7.2px;font-weight:bold;color:#202020;letter-spacing:0.15px">&lt;None&gt;</div>
<div class="t" style="left:65.3px;top:394.03px;font-size:30.6px;font-weight:bold;color:#ec1c24;letter-spacing:-0.5px">OLD</div>
<div class="t" style="left:121.3px;top:429.72px;font-size:29.8px;font-weight:bold;color:#ec1c24;transform:scaleX(1.07);transform-origin:0 0">NEW</div>
<svg style="left:0;top:0" width="260" height="560"><path d="M81.1 432.9 H91.5 V485.7 H97.05 L86.3 537.8 L75.55 485.7 H81.1 Z" fill="none" stroke="#ec1c24" stroke-width="3.8" stroke-linejoin="round"/></svg>
<svg style="left:0;top:0" width="260" height="560"><path d="M157.25 468.8 H169.35000000000002 V503.5 H175.55 L163.3 539.8 L151.05 503.5 H157.25 Z" fill="none" stroke="#ec1c24" stroke-width="3.5" stroke-linejoin="round"/></svg>
<div class="a" style="left:5px;top:546.3px;width:1211.5px;height:54.5px;border:1.4px solid #a2a2a2;border-radius:1px"></div>
<div class="a" style="left:7.9px;top:548.8px;width:36.9px;height:15.6px;background:#c6c6c6;border:1.5px solid #262626;border-radius:1.5px;box-shadow:inset 1px 1px 0 #f4f4f4"></div>

<svg style="left:10px;top:550.5px" width="32" height="12" viewBox="0 0 32 12"><path d="M12 6.3Q15 3.8 19.5 3.6" stroke="#e03020" stroke-width="2.4" fill="none" stroke-linecap="round"/><path d="M17.5 3.2L23.5 1.6" stroke="#161616" stroke-width="1.6" stroke-linecap="round"/><text x="16.2" y="10.6" font-size="3.9" font-weight="bold" text-anchor="middle" fill="#262626" font-family="Liberation Sans" textLength="26" lengthAdjust="spacingAndGlyphs">ACTIVANT</text></svg>
<div class="a" style="left:47.4px;top:548.8px;width:36.9px;height:15.6px;background:#c6c6c6;border:1.5px solid #262626;border-radius:1.5px;box-shadow:inset 1px 1px 0 #f4f4f4"></div>

<svg style="left:58.8px;top:551.6px" width="13.6" height="10" viewBox="0 0 13.6 10"><rect x="0.3" y="0.3" width="13" height="7.4" fill="#141414" stroke="#8a7a2a" stroke-width="0.6"/><text x="6.8" y="3.6" font-size="3.4" font-weight="bold" font-style="italic" text-anchor="middle" fill="#eee" font-family="Liberation Sans" textLength="8" lengthAdjust="spacingAndGlyphs">Auto</text><text x="6.8" y="6.9" font-size="3.4" font-weight="bold" font-style="italic" text-anchor="middle" fill="#eee" font-family="Liberation Sans" textLength="10" lengthAdjust="spacingAndGlyphs">Value</text><rect x="0.3" y="7.8" width="13" height="2" fill="#e8505a"/></svg>
<div class="a" style="left:87px;top:548.8px;width:37px;height:15.6px;background:#c6c6c6;border:1.5px solid #262626;border-radius:1.5px;box-shadow:inset 1px 1px 0 #f4f4f4"></div>

<svg style="left:95px;top:551.3px" width="21" height="10.5" viewBox="0 0 21 10.5"><rect x="0" y="0" width="21" height="8" fill="#1a1a1a"/><rect x="1" y="0.8" width="19" height="1.8" fill="#e6e6e6"/><rect x="1" y="3.2" width="19" height="1.3" fill="#c8a62a"/><rect x="1" y="5" width="19" height="1.8" fill="#e6e6e6"/><rect x="0" y="8" width="21" height="2.3" fill="#e8505a"/></svg>
<div class="a" style="left:126.5px;top:548.8px;width:37px;height:15.6px;background:#000;border-radius:1px"></div>
<svg style="left:126.5px;top:548.8px" width="37" height="15.6" viewBox="0 0 37 15.6"><rect x="7.6" y="1.9" width="23" height="12" rx="1" fill="none" stroke="#a88c28" stroke-width="0.9"/><text x="19" y="7.2" font-size="6" font-weight="bold" font-style="italic" text-anchor="middle" fill="#e8e8e8" font-family="Liberation Sans" textLength="17" lengthAdjust="spacingAndGlyphs">Auto</text><text x="19" y="12.6" font-size="6" font-weight="bold" font-style="italic" text-anchor="middle" fill="#e8e8e8" font-family="Liberation Sans" textLength="19" lengthAdjust="spacingAndGlyphs">Value</text></svg>
<div class="a" style="left:166.3px;top:548.8px;width:37.2px;height:15.6px;background:#000"></div>
<svg style="left:166.3px;top:548.8px" width="37.2" height="15.6" viewBox="0 0 37.2 15.6"><text x="1.8" y="6.6" font-size="5.6" font-weight="bold" fill="#dcdcdc" font-family="Liberation Sans" textLength="33.5" lengthAdjust="spacingAndGlyphs">BUMPER</text><rect x="1.8" y="7.3" width="33.5" height="1.7" fill="#b59a28"/><text x="1.8" y="14" font-size="5.6" font-weight="bold" fill="#dcdcdc" font-family="Liberation Sans" textLength="33.5" lengthAdjust="spacingAndGlyphs">BUMPER</text></svg>
<div class="t" style="right:1132.30px;top:568.29px;font-size:7.6px;font-weight:bold;color:#222;letter-spacing:0.2px">Parts</div>
<div class="t" style="right:1079.80px;top:568.29px;font-size:7.6px;font-weight:bold;color:#222;letter-spacing:0.2px">Labor</div>
<div class="t" style="right:1021.00px;top:568.29px;font-size:7.6px;font-weight:bold;color:#222;letter-spacing:0.2px">Sub Total</div>
<div class="t" style="right:972.80px;top:568.29px;font-size:7.6px;font-weight:bold;color:#222;letter-spacing:0.2px">Haz Mat.</div>
<div class="t" style="right:924.30px;top:568.29px;font-size:7.6px;font-weight:bold;color:#222;letter-spacing:0.2px">Supplies</div>
<div class="t" style="right:883.30px;top:568.29px;font-size:7.6px;font-weight:bold;color:#222;letter-spacing:0.2px">Tax</div>
<div class="t" style="right:830.00px;top:568.29px;font-size:7.6px;font-weight:bold;color:#222;letter-spacing:0.2px">Total</div>
<div class="t" style="right:626.30px;top:568.29px;font-size:7.6px;font-weight:bold;color:#222;letter-spacing:0.2px">Inv. Bal.</div>
<div class="a" style="left:6.25px;top:576.6px;width:38.5px;height:1px;background:#d2d2d2"></div>
<div class="a" style="left:48.75px;top:576.6px;width:48.5px;height:1px;background:#d2d2d2"></div>
<div class="a" style="left:101px;top:576.6px;width:48.400000000000006px;height:1px;background:#d2d2d2"></div>
<div class="a" style="left:153.75px;top:576.6px;width:54.25px;height:1px;background:#d2d2d2"></div>
<div class="a" style="left:212px;top:576.6px;width:45px;height:1px;background:#d2d2d2"></div>
<div class="a" style="left:260.6px;top:576.6px;width:44.39999999999998px;height:1px;background:#d2d2d2"></div>
<div class="a" style="left:309px;top:576.6px;width:37px;height:1px;background:#d2d2d2"></div>
<div class="a" style="left:350px;top:576.6px;width:48.60000000000002px;height:1px;background:#d2d2d2"></div>
<div class="a" style="left:402px;top:576.6px;width:140px;height:1px;background:#d2d2d2"></div>
<div class="a" style="left:546.5px;top:576.6px;width:57.5px;height:1px;background:#d2d2d2"></div>
<div class="t" style="right:1181.80px;top:578.29px;font-size:7.6px;font-weight:bold;color:#222;letter-spacing:0.2px">Invoice</div>
<div class="t" style="right:1181.80px;top:588.09px;font-size:7.6px;font-weight:bold;color:#222;letter-spacing:0.2px">Estimate</div>
<div class="t" style="right:1129.20px;top:588.09px;font-size:7.6px;font-weight:bold;color:#222;letter-spacing:0.2px">308.20</div>
<div class="t" style="right:1076.70px;top:588.09px;font-size:7.6px;font-weight:bold;color:#222;letter-spacing:0.2px">0.00</div>
<div class="t" style="right:1018.50px;top:588.09px;font-size:7.6px;font-weight:bold;color:#222;letter-spacing:0.2px">308.20</div>
<div class="t" style="right:969.50px;top:588.09px;font-size:7.6px;font-weight:bold;color:#222;letter-spacing:0.2px">0.00</div>
<div class="t" style="right:921.50px;top:588.09px;font-size:7.6px;font-weight:bold;color:#222;letter-spacing:0.2px">0.00</div>
<div class="t" style="right:880.50px;top:588.09px;font-size:7.6px;font-weight:bold;color:#222;letter-spacing:0.2px">0.00</div>
<div class="t" style="right:827.90px;top:588.09px;font-size:7.6px;font-weight:bold;color:#222;letter-spacing:0.2px">308.20</div>
<div class="t" style="right:622.50px;top:578.29px;font-size:7.6px;font-weight:bold;color:#222;letter-spacing:0.2px">308.20</div>
<div class="a" style="left:6px;top:605.6px;width:79.7px;height:14px;background:#e1e1e1;border:1px solid #c8c8c8"></div>
<div class="t" style="left:-154.15px;width:400px;text-align:center;top:608.10px;font-size:7.5px;font-weight:bold;color:#2a2a2a;">Convert to Order</div>
<div class="a" style="left:90.2px;top:605.6px;width:71.49999999999999px;height:14px;background:#e1e1e1;border:1px solid #c8c8c8"></div>
<div class="t" style="left:-74.05px;width:400px;text-align:center;top:608.10px;font-size:7.5px;font-weight:bold;color:#2a2a2a;">Parts Ordering</div>
<div class="a" style="left:165.6px;top:605.6px;width:80.4px;height:14px;background:#e1e1e1;border:1px solid #c8c8c8"></div>
<div class="t" style="left:5.80px;width:400px;text-align:center;top:608.10px;font-size:7.5px;font-weight:bold;color:#3030c8;">SocialCRM Details</div>
<div class="a" style="left:909.4px;top:605.6px;width:44.5px;height:14px;background:#e1e1e1;border:1px solid #c8c8c8"></div>
<div class="t" style="left:731.65px;width:400px;text-align:center;top:608.10px;font-size:7.5px;font-weight:bold;color:#2a2a2a;">Options</div>
<div class="a" style="left:956.7px;top:605.6px;width:49.299999999999955px;height:14px;background:#e1e1e1;border:1px solid #c8c8c8"></div>
<div class="t" style="left:781.35px;width:400px;text-align:center;top:608.10px;font-size:7.5px;font-weight:bold;color:#2a2a2a;">View PO</div>
<div class="a" style="left:1010.2px;top:605.6px;width:51.5px;height:14px;background:#e1e1e1;border:1px solid #c8c8c8"></div>
<div class="t" style="left:835.95px;width:400px;text-align:center;top:608.10px;font-size:7.5px;font-weight:bold;color:#2a2a2a;">Worksheet</div>
<div class="a" style="left:1065px;top:605.6px;width:36.59999999999991px;height:14px;background:#e1e1e1;border:1px solid #c8c8c8"></div>
<div class="t" style="left:883.30px;width:400px;text-align:center;top:608.10px;font-size:7.5px;font-weight:bold;color:#2a2a2a;">Email</div>
<div class="a" style="left:1105.4px;top:605.6px;width:39.5px;height:14px;background:#e1e1e1;border:1px solid #c8c8c8"></div>
<div class="t" style="left:925.15px;width:400px;text-align:center;top:608.10px;font-size:7.5px;font-weight:bold;color:#2a2a2a;">Text</div>
<div class="a" style="left:1148.8px;top:605.6px;width:30.90000000000009px;height:14px;background:#e1e1e1;border:1px solid #c8c8c8"></div>
<div class="t" style="left:964.25px;width:400px;text-align:center;top:608.10px;font-size:7.5px;font-weight:bold;color:#2a2a2a;">Print</div>
<div class="a" style="left:1183px;top:605.6px;width:33.799999999999955px;height:14px;background:#e1e1e1;border:1px solid #c8c8c8"></div>
<div class="t" style="left:999.90px;width:400px;text-align:center;top:608.10px;font-size:7.5px;font-weight:bold;color:#2a2a2a;">Exit</div>
</body></html>
